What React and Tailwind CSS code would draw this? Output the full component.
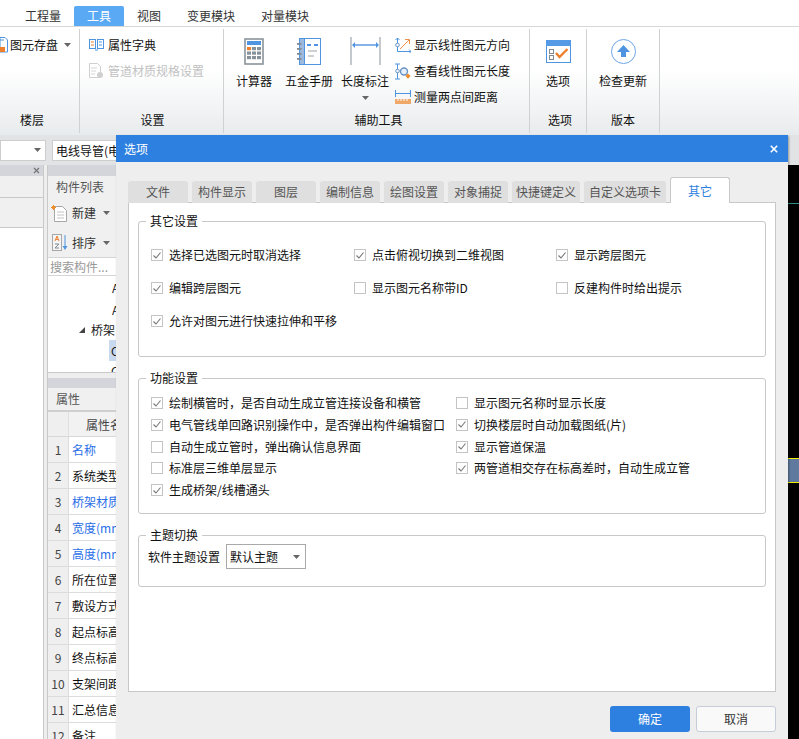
import React from "react";

const Caret = ({ className = "" }) => (
  <svg width="7" height="4" viewBox="0 0 7 4" className={className}>
    <path d="M0 0h7L3.5 4z" fill="#666" />
  </svg>
);

const CalcIcon = () => (
  <svg width="20" height="27" viewBox="0 0 20 27">
    <rect x="1" y="1" width="18" height="25" fill="#fff" stroke="#8a949c" strokeWidth="1.6" />
    <rect x="3" y="3" width="14" height="4" fill="#4f94e0" />
    {[9, 13.5, 18].map((y) =>
      [3, 8, 13].map((x, i) => (
        <rect key={`${x}-${y}`} x={x} y={y} width="4" height="3.2" fill={y === 9 && i === 0 ? "#ee7f2d" : "#86919a"} />
      ))
    )}
  </svg>
);

const BookIcon = () => (
  <svg width="24" height="27" viewBox="0 0 24 27">
    <rect x="2.5" y="0.5" width="21" height="26" fill="#fff" stroke="#4f94e0" />
    <rect x="2.5" y="0.5" width="5" height="26" fill="#9db9de" stroke="#4f94e0" />
    {[5, 10, 15, 20].map((y) => (
      <rect key={y} x="0" y={y} width="4.5" height="1.8" fill="#7f8a92" />
    ))}
    <path d="M10 7h4M17 7h4" stroke="#4f94e0" strokeWidth="1.8" />
    <path d="M11 13h9M11 18h6" stroke="#9aa3aa" />
  </svg>
);

const LengthIcon = () => (
  <svg width="31" height="28" viewBox="0 0 31 28">
    <path d="M1 0v28M30 0v28" stroke="#8a949c" />
    <path d="M3 8h25" stroke="#a9c9f0" strokeWidth="2" />
    <path d="M3 8h25" stroke="#4f94e0" strokeWidth="0.8" />
    <path d="M2 8l3-3v6zM29 8l-3-3v6z" fill="#4f94e0" />
  </svg>
);

const DirectionIcon = () => (
  <svg width="16" height="16" viewBox="0 0 16 16">
    <path d="M2.5 1v13.5H16" stroke="#4f94e0" fill="none" />
    <path d="M0.5 3l2-2 2 2M14 12.5l2 2-2 2" stroke="#4f94e0" fill="none" />
    <circle cx="2.5" cy="8" r="1.8" fill="#fff" stroke="#6b93c4" />
    <path d="M5 12L14 3M10 2.5h4.5V7" stroke="#ee8f4a" fill="none" />
  </svg>
);

const LookupIcon = () => (
  <svg width="16" height="17" viewBox="0 0 16 17">
    <path d="M2.5 1v15M0 16h5M0 1h5" stroke="#4f94e0" />
    <circle cx="2.5" cy="8" r="1.8" fill="#fff" stroke="#6b93c4" />
    <circle cx="9" cy="8.5" r="3.5" fill="#e6f0fb" stroke="#6b93c4" strokeWidth="1.4" />
    <path d="M13 10.5l2.6 2.6-2.6 2.6-2.6-2.6z" fill="#ee8f2d" />
  </svg>
);

const MeasureIcon = () => (
  <svg width="16" height="14" viewBox="0 0 16 14">
    <path d="M0.5 0v7M15.5 0v7M1 3.5h14" stroke="#4f94e0" />
    <rect x="0" y="9" width="16" height="5" fill="#f0a868" />
    <path d="M3 9v2M6 9v2M9 9v2M12 9v2" stroke="#fff" />
  </svg>
);

const OptionIcon = () => (
  <svg width="25" height="23" viewBox="0 0 25 23">
    <rect x="0.5" y="0.5" width="24" height="22" fill="#fff" stroke="#4f94e0" />
    <rect x="0" y="0" width="25" height="6" fill="#559ae4" />
    <rect x="3.5" y="9.5" width="4" height="4" fill="none" stroke="#7f8a92" />
    <rect x="3.5" y="15.5" width="4" height="4" fill="none" stroke="#7f8a92" />
    <path d="M10 13l3.5 4 8-8" stroke="#ee7f2d" strokeWidth="2.4" fill="none" />
  </svg>
);

const UpdateIcon = () => (
  <svg width="25" height="25" viewBox="0 0 25 25">
    <circle cx="12.5" cy="12.5" r="12" fill="#fff" stroke="#6ea5e6" />
    <path d="M12.5 6l6.5 7h-4v5h-5v-5H6z" fill="#4f94e0" />
  </svg>
);

const DictIcon = () => (
  <svg width="15" height="12" viewBox="0 0 15 12">
    <path d="M0 0h7v10H0zM8 0h7v10H8z" fill="#4f94e0" />
    <path d="M1 1h5v8H1zM9 1h5v8H9z" fill="#fff" />
    <path d="M2 3h3M2 6h3" stroke="#ee7f2d" />
    <path d="M10 3h3M10 6h3" stroke="#4f94e0" />
    <path d="M6 11h3" stroke="#4f94e0" />
  </svg>
);

const PipeSetIcon = () => (
  <svg width="15" height="16" viewBox="0 0 15 16">
    <path d="M0.5 0.5h8l3 3v11h-11z" fill="#fff" stroke="#cfcfcf" />
    <path d="M2 5h6M2 8h5M2 11h4" stroke="#d5d5d5" />
    <circle cx="11" cy="12" r="3" fill="#d0d0d0" />
  </svg>
);

const NewIcon = () => (
  <svg width="16" height="17" viewBox="0 0 16 17">
    <path d="M3.5 1.5h8l4 4v11h-12z" fill="#fff" stroke="#a7a7a7" />
    <path d="M6 7h7M6 10h7M6 13h7" stroke="#c3c3c3" />
    <path d="M2.5 0v5M0 2.5h5M1 1l3 3M4 1L1 4" stroke="#ee8f2d" />
  </svg>
);

const SortIcon = () => (
  <svg width="16" height="17" viewBox="0 0 16 17">
    <rect x="0.5" y="0.5" width="9" height="16" fill="#f4f4f4" stroke="#a7a7a7" />
    <path d="M3 7l2-5 2 5M3.8 5.4h2.4" stroke="#ee7f2d" fill="none" />
    <path d="M3 10h4l-4 4h4" stroke="#7f8a92" fill="none" />
    <path d="M13 1v13" stroke="#4f94e0" />
    <path d="M10.5 12l2.5 4 2.5-4z" fill="#4f94e0" />
  </svg>
);

const SaveIcon = () => (
  <svg width="8" height="16" viewBox="0 0 8 16">
    <path d="M0 0.5h5l2.5 2.5v12H0z" fill="#fff" stroke="#4f94e0" />
    <path d="M0 10h5v5H0z" fill="#ee7f2d" />
    <path d="M0 3h4" stroke="#4f94e0" />
  </svg>
);

const RibbonGroup = ({ label, width, labelClass = "", children }) => (
  <div className="flex flex-col h-[104px] border-r border-[#cfd1d2] shrink-0 my-[2px]" style={{ width }}>
    <div className="flex-1 flex min-h-0">{children}</div>
    <div className={`h-[21px] text-center text-[#111] ${labelClass}`}>{label}</div>
  </div>
);

const BigButton = ({ icon, label, width, caret }) => (
  <div className="flex flex-col items-center shrink-0 pt-[7px]" style={{ width }}>
    <div className="h-[30px] flex items-center">{icon}</div>
    <div className="mt-[6px] leading-[18px] text-[#111] whitespace-nowrap">{label}</div>
    {caret && <Caret className="mt-[6px]" />}
  </div>
);

const SmallTool = ({ icon, label }) => (
  <div className="flex items-center h-[26px]">
    <div className="w-[19px] flex justify-start">{icon}</div>
    <span className="text-[#111]">{label}</span>
  </div>
);

const tabs = [
  { label: "文件", width: 60 },
  { label: "构件显示", width: 60 },
  { label: "图层", width: 60 },
  { label: "编制信息", width: 60 },
  { label: "绘图设置", width: 60 },
  { label: "对象捕捉", width: 60 },
  { label: "快捷键定义", width: 68 },
  { label: "自定义选项卡", width: 82 },
];

const otherOptions = [
  { label: "选择已选图元时取消选择", checked: true },
  { label: "点击俯视切换到二维视图", checked: true },
  { label: "显示跨层图元", checked: true },
  { label: "编辑跨层图元", checked: true },
  { label: "显示图元名称带ID", checked: false },
  { label: "反建构件时给出提示", checked: false },
  { label: "允许对图元进行快速拉伸和平移", checked: true },
];

const funcOptions = [
  { label: "绘制横管时，是否自动生成立管连接设备和横管", checked: true },
  { label: "显示图元名称时显示长度", checked: false },
  { label: "电气管线单回路识别操作中，是否弹出构件编辑窗口", checked: true },
  { label: "切换楼层时自动加载图纸(片)", checked: true },
  { label: "自动生成立管时，弹出确认信息界面", checked: false },
  { label: "显示管道保温", checked: true },
  { label: "标准层三维单层显示", checked: false },
  { label: "两管道相交存在标高差时，自动生成立管", checked: true },
  { label: "生成桥架/线槽通头", checked: true },
];

const propRows = [
  { name: "名称", blue: true },
  { name: "系统类型" },
  { name: "桥架材质", blue: true },
  { name: "宽度(mm)", blue: true },
  { name: "高度(mm)", blue: true },
  { name: "所在位置" },
  { name: "敷设方式" },
  { name: "起点标高" },
  { name: "终点标高" },
  { name: "支架间距" },
  { name: "汇总信息" },
  { name: "备注" },
];

const Check = ({ label, checked }) => (
  <label className="flex items-center gap-[6px] text-[#111] whitespace-nowrap">
    <span className="w-[12px] h-[12px] border border-[#c4c4c4] bg-white flex items-center justify-center shrink-0">
      {checked && (
        <svg width="8" height="7" viewBox="0 0 8 7">
          <path d="M0.5 3.5L3 6l4.5-5.5" stroke="#777" strokeWidth="1.1" fill="none" />
        </svg>
      )}
    </span>
    {label}
  </label>
);

const Group = ({ title, className, children }) => (
  <fieldset className={`border border-[#c8c8c8] rounded-[3px] ${className}`}>
    <legend className="ml-[7px] px-[4px] leading-[14px] text-[#111]">{title}</legend>
    {children}
  </fieldset>
);

export default function App() {
  return (
    <div
      className="relative w-[799px] h-[739px] overflow-hidden bg-white text-[12px] leading-[16px]"
      style={{ fontFamily: '"Noto Sans CJK SC", "Liberation Sans", sans-serif' }}
    >
      {/* menu tabs */}
      <div className="h-[27px] pl-[12px] flex items-end border-b border-[#d8d8d8] bg-white">
        {["工程量", "工具", "视图", "变更模块", "对量模块"].map((t) => (
          <div
            key={t}
            className={`h-[20px] px-[13px] leading-[20px] ${t === "工具" ? "bg-[#5aa9f5] text-white rounded-t-[2px]" : "text-[#333]"}`}
          >
            {t}
          </div>
        ))}
      </div>

      {/* ribbon */}
      <div className="h-[108px] flex bg-gradient-to-b from-white from-40% to-[#e8ebed] overflow-hidden">
        <RibbonGroup label="楼层" width={80} labelClass="pr-[15px]">
          <div className="flex items-center h-[26px] mt-[3px] text-[#111]">
            <SaveIcon />
            <span className="ml-[2px]">图元存盘</span>
            <Caret className="ml-[6px]" />
          </div>
        </RibbonGroup>
        <RibbonGroup label="设置" width={144} labelClass="pl-[2px]">
          <div className="pl-[9px] pt-[3px]">
            <div className="flex items-center h-[26px] text-[#111]">
              <DictIcon />
              <span className="ml-[4px]">属性字典</span>
            </div>
            <div className="flex items-center h-[26px] text-[#c2c2c2]">
              <PipeSetIcon />
              <span className="ml-[4px]">管道材质规格设置</span>
            </div>
          </div>
        </RibbonGroup>
        <RibbonGroup label="辅助工具" width={306} labelClass="pl-[4px]">
          <div className="pl-[7px] flex">
            <BigButton icon={<CalcIcon />} label="计算器" width={46} />
            <BigButton icon={<BookIcon />} label="五金手册" width={64} />
            <BigButton icon={<LengthIcon />} label="长度标注" width={48} caret />
            <div className="pl-[6px] pt-[3px]">
              <SmallTool icon={<DirectionIcon />} label="显示线性图元方向" />
              <SmallTool icon={<LookupIcon />} label="查看线性图元长度" />
              <SmallTool icon={<MeasureIcon />} label="测量两点间距离" />
            </div>
          </div>
        </RibbonGroup>
        <RibbonGroup label="选项" width={57} labelClass="pl-[4px]">
          <BigButton icon={<OptionIcon />} label="选项" width={56} />
        </RibbonGroup>
        <RibbonGroup label="版本" width={73}>
          <BigButton icon={<UpdateIcon />} label="检查更新" width={72} />
        </RibbonGroup>
      </div>

      {/* select toolbar */}
      <div className="h-[30px] flex items-center bg-[#e2e3e4]">
        <div className="w-[46px] h-[21px] bg-white border border-[#cdcdcd] flex items-center justify-end pr-[4px]">
          <Caret />
        </div>
        <div className="ml-[6px] w-[120px] h-[21px] bg-white border border-[#cdcdcd] px-[3px] leading-[19px] text-[#111] whitespace-nowrap overflow-hidden">
          电线导管(电气)
        </div>
      </div>

      {/* work area */}
      <div className="flex h-[574px] bg-[#eeeeee]">
        <div className="w-[44px] bg-white border-r border-[#c9c9c9] shrink-0">
          <div className="h-[11px] bg-[#d3d5da] flex items-center justify-end pr-[3px]">
            <svg width="7" height="7" viewBox="0 0 7 7">
              <path d="M1 1l5 5M6 1L1 6" stroke="#777" strokeWidth="1.3" />
            </svg>
          </div>
          <div className="h-[22px] bg-[#f0f0f0] border-b border-[#c9c9c9]" />
          <div className="h-[30px] bg-[#f0f0f0] border-b border-[#c9c9c9]" />
        </div>
        <div className="ml-[3px] w-[69px] shrink-0 overflow-hidden bg-white border-l border-[#c9c9c9]">
          <div className="h-[11px] bg-[#d3d5da]" />
          <div className="h-[22px] bg-[#f0f0f0] pl-[8px] leading-[22px] text-[#555] whitespace-nowrap">构件列表</div>
          <div className="h-[30px] bg-[#f0f0f0] flex items-center pl-[3px] text-[#333]">
            <NewIcon />
            <span className="ml-[5px]">新建</span>
            <Caret className="ml-[7px]" />
          </div>
          <div className="h-[29px] bg-[#f0f0f0] flex items-center pl-[4px] text-[#333]">
            <SortIcon />
            <span className="ml-[4px]">排序</span>
            <Caret className="ml-[7px]" />
          </div>
          <div className="h-[19px] border-y border-[#d5d5d5] pl-[2px] leading-[17px] text-[#999] whitespace-nowrap">搜索构件...</div>
          <div className="h-[97px] border-b border-[#c9c9c9] relative text-[#222] overflow-hidden">
            <div className="pl-[64px] h-[24px] leading-[24px]">A</div>
            <div className="pl-[64px] h-[20px] leading-[20px]">A</div>
            <div className="flex items-center h-[20px] pl-[31px]">
              <svg width="6" height="6" viewBox="0 0 6 6">
                <path d="M6 0v6H0z" fill="#444" />
              </svg>
              <span className="ml-[6px] whitespace-nowrap">桥架</span>
            </div>
            <div className="ml-[61px] h-[21px] bg-[#c9daf0] pl-[2px] leading-[21px]">C</div>
            <div className="pl-[63px] leading-[20px]">C</div>
          </div>
          <div className="h-[5px] bg-[#eeeeee]" />
          <div className="h-[10px] bg-[#d3d5da]" />
          <div className="h-[22px] bg-[#f0f0f0] pl-[8px] leading-[22px] text-[#555]">属性</div>
          <div className="h-[2px] bg-[#cfcfcf]" />
          <div className="flex h-[25px] border-b border-[#d8d8d8]">
            <div className="w-[21px] bg-[#efefef] border-r border-[#e0e0e0] shrink-0" />
            <div className="w-[80px] shrink-0 bg-[#f2f2f2] pl-[17px] leading-[25px] text-[#444] whitespace-nowrap">属性名称</div>
          </div>
          {propRows.map((row, i) => (
            <div key={row.name} className="flex h-[26px] border-b border-[#dcdcdc]">
              <div className="w-[21px] bg-[#efefef] border-r border-[#dcdcdc] text-center leading-[26px] text-[#444] shrink-0">{i + 1}</div>
              <div className={`pl-[3px] leading-[25px] whitespace-nowrap ${row.blue ? "text-[#2a6fe8]" : "text-[#111]"}`}>{row.name}</div>
            </div>
          ))}
        </div>
        <div className="flex-1 bg-black ml-[672px] relative">
          <div className="absolute left-0 right-0 top-[38px] h-px bg-[#2f8f8a]" />
          <div className="absolute left-0 right-0 top-[293px] h-[25px] bg-[#5f7a9e] border-y border-[#f2f200]" />
        </div>
      </div>

      {/* options dialog */}
      <div className="absolute left-[116px] top-[135px] w-[672px] h-[604px] bg-[#eeeeee] flex flex-col shadow-[1px_1px_2px_rgba(0,0,0,0.35)]">
        <div className="h-[27px] bg-[#2d7fe0] flex items-center justify-between pl-[8px] pr-[10px] text-white shrink-0">
          <span>选项</span>
          <svg width="8" height="8" viewBox="0 0 8 8">
            <path d="M0.8 0.8l6.4 6.4M7.2 0.8L0.8 7.2" stroke="#fff" strokeWidth="1.6" />
          </svg>
        </div>
        <div className="flex items-end gap-[4px] ml-[12px] mt-[15px] h-[26px] shrink-0 relative z-10">
          {tabs.map((t) => (
            <div
              key={t.label}
              className="h-[22px] bg-[#dfdfdf] rounded-t-[3px] text-center leading-[22px] text-[#555] whitespace-nowrap"
              style={{ width: t.width }}
            >
              {t.label}
            </div>
          ))}
          <div className="h-[26px] w-[60px] bg-white border border-b-0 border-[#c8c8c8] rounded-t-[3px] text-center leading-[26px] text-[#2d7fe0]">
            其它
          </div>
        </div>
        <div className="mx-[12px] h-[490px] -mt-px bg-white border border-[#c8c8c8] pt-[11px] px-[9px] shrink-0">
          <Group title="其它设置" className="h-[143px]">
            <div className="grid grid-cols-[203px_202px_1fr] gap-y-[17px] px-[12px] pt-[19px]">
              {otherOptions.map((o) => (
                <Check key={o.label} label={o.label} checked={o.checked} />
              ))}
            </div>
          </Group>
          <Group title="功能设置" className="mt-[14px] h-[143px]">
            <div className="grid grid-cols-[305px_1fr] gap-y-[5.75px] px-[12px] pt-[10px]">
              {funcOptions.map((o) => (
                <Check key={o.label} label={o.label} checked={o.checked} />
              ))}
            </div>
          </Group>
          <Group title="主题切换" className="mt-[14px] h-[59px]">
            <div className="flex items-center gap-[6px] text-[#111] pl-[9px] pt-[2px]">
              软件主题设置
              <div className="w-[80px] h-[25px] border border-[#a9a9a9] flex items-center justify-between px-[3px]">
                默认主题
                <Caret className="mr-[2px]" />
              </div>
            </div>
          </Group>
        </div>
        <div className="flex justify-end gap-[6px] mr-[12px] mt-[14px]">
          <button className="w-[80px] h-[26px] bg-[#2d7fe0] rounded-[3px] text-white">确定</button>
          <button className="w-[80px] h-[26px] bg-[#f9f9f9] border border-[#c5cdd8] rounded-[3px] text-[#333]">取消</button>
        </div>
      </div>
    </div>
  );
}
